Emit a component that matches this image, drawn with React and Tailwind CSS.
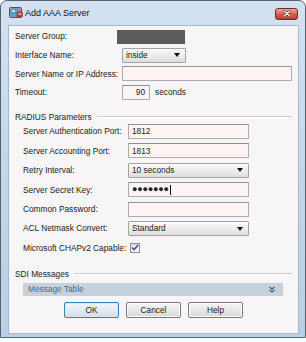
import React from 'react';

const Input = ({ w, children, right }) => (
    <div className={`h-[15px] ${w} border border-[#abadb3] border-t-[#8e9096] bg-[#fff4f4] flex items-center ${right ? 'justify-end pr-[4px]' : 'pl-[3px]'}`}>
        {children}
    </div>
);

const Select = ({ w, value }) => (
    <div className={`h-[15px] ${w} border border-[#a3a3a3] rounded-[1px] bg-linear-to-b from-[#fbfbfb] to-[#dedede] flex items-center justify-between pl-[3px] pr-[5px]`}>
        <span>{value}</span>
        <svg width="6" height="4" viewBox="0 0 6 4"><path d="M0 0h6L3 4z" fill="#111" /></svg>
    </div>
);

const Row = ({ label, lw, children }) => (
    <div className="h-[15px] flex items-center">
        <div className={`${lw} shrink-0`}>{label}</div>
        {children}
    </div>
);

const GroupHeader = ({ title }) => (
    <div className="h-[12px] w-[277px] flex items-center">
        <span>{title}</span>
        <div className="flex-1 ml-[5px] h-[2px] border-t border-[#cbcbcb] bg-white" />
    </div>
);

const Button = ({ label, primary }) => (
    <div className={`h-[16px] w-[55px] rounded-[2px] border flex items-center justify-center ${primary ? 'border-[#3c7fb1] bg-linear-to-b from-[#f2f7fb] to-[#d3dfe9] shadow-[inset_0_0_0_1px_#cfeafa]' : 'border-[#7a7a7a] bg-linear-to-b from-[#f6f6f6] to-[#d9d9d9] shadow-[inset_0_0_0_1px_#fbfbfb]'}`}>
        {label}
    </div>
);

export default function App() {
    return (
        <div className="w-[306px] h-[342px] bg-white font-['Liberation_Sans',Arial,sans-serif] text-[8.3px] text-[#222] leading-none">
            <div className="w-[306px] h-[338px] border border-[#56636f] rounded-t-[7px] bg-linear-to-b from-[#d2e2f3] via-[#c3d7ec] to-[#b8cfe8] flex flex-col">
                {/* Title bar */}
                <div className="h-[24px] shrink-0 flex items-center pl-[8px] pr-[7px]">
                    <svg width="14" height="12" viewBox="0 0 14 12" className="shrink-0">
                        <rect x="0.5" y="0.5" width="12" height="10" rx="1" fill="#8a97a6" stroke="#4b5866" />
                        <rect x="2" y="2" width="7" height="6" fill="#3aa6d8" />
                        <rect x="3" y="3" width="3" height="2" fill="#bfe8fa" />
                        <rect x="8" y="5" width="5.5" height="5" rx="1" fill="#d23b2c" stroke="#7d1c13" strokeWidth="0.6" />
                        <rect x="9.3" y="6.5" width="3" height="1" fill="#fff" />
                    </svg>
                    <span className="ml-[2px] text-[9px] text-[#111]">Add AAA Server</span>
                    <div className="ml-auto mt-[1px] w-[23px] h-[12px] rounded-[3px] border border-[#6f2b22] bg-linear-to-b from-[#e9a99c] via-[#d4604c] to-[#c23a25] flex items-center justify-center">
                        <svg width="8" height="7" viewBox="0 0 8 7">
                            <path d="M1 1l6 5M7 1L1 6" stroke="#5a1a12" strokeWidth="2.4" strokeLinecap="round" />
                            <path d="M1 1l6 5M7 1L1 6" stroke="#fff" strokeWidth="1.4" strokeLinecap="round" />
                        </svg>
                    </div>
                </div>

                {/* Client area */}
                <div className="ml-[7px] w-[291px] h-[309px] border border-[#a9b8c8] bg-[#f7f5f5] pl-[6px] pt-[3px] flex flex-col">
                    <div className="flex flex-col gap-[3.7px]">
                        <Row label="Server Group:" lw="w-[102px]">
                            <div className="h-[14px] w-[68px] bg-[#5b5b5b]" />
                        </Row>
                        <Row label="Interface Name:" lw="w-[107px]">
                            <Select w="w-[64px]" value="inside" />
                        </Row>
                        <Row label="Server Name or IP Address:" lw="w-[107px]">
                            <Input w="w-[170px]" />
                        </Row>
                        <Row label="Timeout:" lw="w-[107px]">
                            <Input w="w-[28px]" right>90</Input>
                            <span className="ml-[5px]">seconds</span>
                        </Row>
                    </div>

                    <div className="mt-[11px]">
                        <GroupHeader title="RADIUS Parameters" />
                    </div>
                    <div className="mt-[1px] pl-[8px] flex flex-col gap-[4.4px]">
                        <Row label="Server Authentication Port:" lw="w-[105px]">
                            <Input w="w-[121px]">1812</Input>
                        </Row>
                        <Row label="Server Accounting Port:" lw="w-[105px]">
                            <Input w="w-[121px]">1813</Input>
                        </Row>
                        <Row label="Retry Interval:" lw="w-[105px]">
                            <Select w="w-[121px]" value="10 seconds" />
                        </Row>
                        <Row label="Server Secret Key:" lw="w-[105px]">
                            <Input w="w-[121px]">
                                <span className="text-[9px] tracking-[-0.2px] font-bold">●●●●●●●</span>
                                <span className="ml-[1px] w-px h-[10px] bg-black" />
                            </Input>
                        </Row>
                        <Row label="Common Password:" lw="w-[105px]">
                            <Input w="w-[121px]" />
                        </Row>
                        <Row label="ACL Netmask Convert:" lw="w-[105px]">
                            <Select w="w-[121px]" value="Standard" />
                        </Row>
                        <Row label="Microsoft CHAPv2 Capable:" lw="w-[107px]">
                            <div className="w-[10px] h-[10px] border border-[#8f8f8f] bg-linear-to-b from-[#dcdcdc] to-[#f7f7f7] flex items-center justify-center">
                                <svg width="8" height="7" viewBox="0 0 8 7">
                                    <path d="M1 3.5l2 2.2L7 1" stroke="#2a4a8c" strokeWidth="1.3" fill="none" />
                                </svg>
                            </div>
                        </Row>
                    </div>

                    <div className="mt-[12.6px]">
                        <GroupHeader title="SDI Messages" />
                    </div>
                    <div className="mt-[3px] ml-[8px] w-[260px] h-[13px] bg-[#c5d2dc] text-[#4e6a80] flex items-center justify-between pl-[5px] pr-[8px]">
                        <span>Message Table</span>
                        <svg width="6" height="7" viewBox="0 0 6 7">
                            <path d="M0.5 0.8L3 3 5.5 0.8M0.5 3.8L3 6 5.5 3.8" stroke="#3c4f60" strokeWidth="1.1" fill="none" />
                        </svg>
                    </div>

                    <div className="mt-[6px] flex justify-center gap-[7px] pr-[6px]">
                        <Button label="OK" primary />
                        <Button label="Cancel" />
                        <Button label="Help" />
                    </div>
                </div>
            </div>
        </div>
    );
}
